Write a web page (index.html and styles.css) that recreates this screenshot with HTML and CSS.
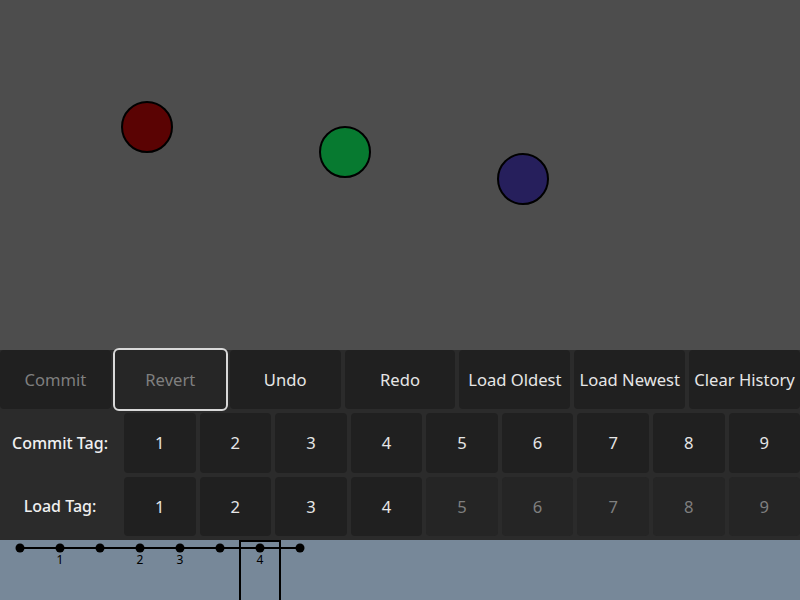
FILE: index.html
```html
<!DOCTYPE html>
<html>
<head>
<meta charset="utf-8">
<link rel="stylesheet" href="styles.css">
</head>
<body>
<div class="app">
  <svg class="canvas" width="800" height="350" viewBox="0 0 800 350">
    <circle cx="147" cy="127" r="25" fill="#5a0303" stroke="#000" stroke-width="2"/>
    <circle cx="345" cy="152" r="25" fill="#077a30" stroke="#000" stroke-width="2"/>
    <circle cx="523" cy="179" r="25" fill="#261f5c" stroke="#000" stroke-width="2"/>
  </svg>
  <div class="panel">
    <div class="row actions">
      <button class="btn disabled">Commit</button>
      <button class="btn disabled focused">Revert</button>
      <button class="btn">Undo</button>
      <button class="btn">Redo</button>
      <button class="btn">Load Oldest</button>
      <button class="btn">Load Newest</button>
      <button class="btn">Clear History</button>
    </div>
    <div class="row tags">
      <div class="label">Commit Tag:</div>
      <button class="btn">1</button>
      <button class="btn">2</button>
      <button class="btn">3</button>
      <button class="btn">4</button>
      <button class="btn">5</button>
      <button class="btn">6</button>
      <button class="btn">7</button>
      <button class="btn">8</button>
      <button class="btn">9</button>
    </div>
    <div class="row tags">
      <div class="label">Load Tag:</div>
      <button class="btn">1</button>
      <button class="btn">2</button>
      <button class="btn">3</button>
      <button class="btn">4</button>
      <button class="btn off">5</button>
      <button class="btn off">6</button>
      <button class="btn off">7</button>
      <button class="btn off">8</button>
      <button class="btn off">9</button>
    </div>
  </div>
  <svg class="timeline" width="800" height="60" viewBox="0 0 800 60">
    <line x1="20" y1="8" x2="300" y2="8" stroke="#000" stroke-width="2"/>
    <g fill="#000">
      <circle cx="20" cy="8" r="4.5"/>
      <circle cx="60" cy="8" r="4.5"/>
      <circle cx="100" cy="8" r="4.5"/>
      <circle cx="140" cy="8" r="4.5"/>
      <circle cx="180" cy="8" r="4.5"/>
      <circle cx="220" cy="8" r="4.5"/>
      <circle cx="260" cy="8" r="4.5"/>
      <circle cx="300" cy="8" r="4.5"/>
    </g>
    <g class="tl-label" text-anchor="middle">
      <text x="60" y="24">1</text>
      <text x="140" y="24">2</text>
      <text x="180" y="24">3</text>
      <text x="260" y="24">4</text>
    </g>
    <rect x="240" y="1" width="40" height="60" fill="none" stroke="#000" stroke-width="2"/>
  </svg>
</div>
</body>
</html>
```

FILE: styles.css
```css
html, body {
  margin: 0;
  padding: 0;
}
body {
  width: 800px;
  height: 600px;
  overflow: hidden;
  font-family: "Noto Sans", "Open Sans", sans-serif;
}
.app {
  display: flex;
  flex-direction: column;
  width: 800px;
  height: 600px;
}
.canvas {
  display: block;
  background: #4d4d4d;
  flex: none;
}
.panel {
  background: #2b2b2b;
  height: 190px;
  box-sizing: border-box;
  padding-bottom: 4px;
  display: grid;
  grid-template-rows: 1fr 1fr 1fr;
  row-gap: 4px;
  flex: none;
}
.row {
  display: flex;
  gap: 4px;
}
.btn {
  flex: 1 1 0;
  min-width: 0;
  border: none;
  border-radius: 4px;
  background: #202020;
  color: #e6e6e6;
  font-family: "Noto Sans", "Open Sans", sans-serif;
  font-size: 16.6px;
  padding: 0;
  white-space: nowrap;
  box-sizing: border-box;
}
.actions .btn.disabled {
  color: #7f7f7f;
}
.btn.focused {
  outline: 2px solid #d9d9d9;
  outline-offset: 0;
  background: #262626;
}
.tags .btn.off {
  background: #252525;
  color: #7f7f7f;
}
.label {
  width: 120px;
  flex: none;
  color: #f0f0f0;
  font-size: 16px;
  font-weight: 500;
  display: flex;
  align-items: center;
  justify-content: center;
}
.timeline {
  display: block;
  background: #778899;
  flex: none;
}
.tl-label {
  font-family: "Noto Sans", "Open Sans", sans-serif;
  font-size: 12px;
  fill: #000;
}
```
